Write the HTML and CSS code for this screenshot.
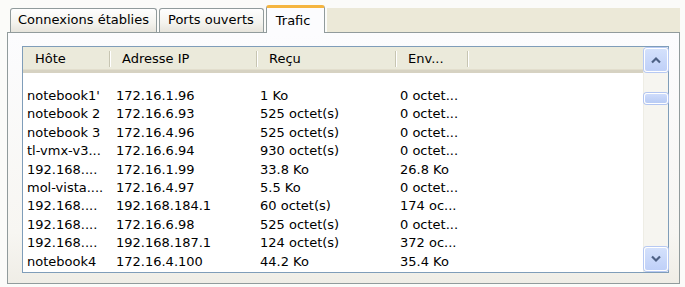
FILE: index.html
```html
<!DOCTYPE html>
<html lang="fr">

<head>
  <meta charset="UTF-8">
  <title>Trafic</title>
  <link rel="stylesheet" href="styles.css">
</head>

<body>
  <div class="window">
    <div class="tabs">
      <div class="tab">Connexions établies</div>
      <div class="tab">Ports ouverts</div>
      <div class="tab active">Trafic</div>
      <div class="tab-fill"></div>
    </div>
    <div class="panel">
      <div class="listview">
        <div class="list">
          <div class="header">
            <div class="col">Hôte</div>
            <div class="col">Adresse IP</div>
            <div class="col">Reçu</div>
            <div class="col">Env...</div>
            <div class="col last"></div>
          </div>
          <div class="rows">
            <div class="row"><span>notebook1'</span><span>172.16.1.96</span><span>1 Ko</span><span>0 octet...</span></div>
            <div class="row"><span>notebook 2</span><span>172.16.6.93</span><span>525 octet(s)</span><span>0 octet...</span></div>
            <div class="row"><span>notebook 3</span><span>172.16.4.96</span><span>525 octet(s)</span><span>0 octet...</span></div>
            <div class="row"><span>tl-vmx-v3...</span><span>172.16.6.94</span><span>930 octet(s)</span><span>0 octet...</span></div>
            <div class="row"><span>192.168....</span><span>172.16.1.99</span><span>33.8 Ko</span><span>26.8 Ko</span></div>
            <div class="row"><span>mol-vista....</span><span>172.16.4.97</span><span>5.5 Ko</span><span>0 octet...</span></div>
            <div class="row"><span>192.168....</span><span>192.168.184.1</span><span>60 octet(s)</span><span>174 oc...</span></div>
            <div class="row"><span>192.168....</span><span>172.16.6.98</span><span>525 octet(s)</span><span>0 octet...</span></div>
            <div class="row"><span>192.168....</span><span>192.168.187.1</span><span>124 octet(s)</span><span>372 oc...</span></div>
            <div class="row"><span>notebook4</span><span>172.16.4.100</span><span>44.2 Ko</span><span>35.4 Ko</span></div>
          </div>
        </div>
        <div class="scrollbar">
          <div class="sb-button">
            <svg width="12" height="8" viewBox="0 0 12 8"><path d="M2 6.5 L6 2.5 L10 6.5" fill="none" stroke="#4d6185" stroke-width="2.2"/></svg>
          </div>
          <div class="sb-track">
            <div class="sb-thumb"></div>
          </div>
          <div class="sb-button">
            <svg width="12" height="8" viewBox="0 0 12 8"><path d="M2 1.5 L6 5.5 L10 1.5" fill="none" stroke="#4d6185" stroke-width="2.2"/></svg>
          </div>
        </div>
      </div>
    </div>
  </div>
</body>

</html>
```

FILE: styles.css
```css
body {
  margin: 0;
  padding: 0;
  background-color: #fbfbf9;
  font-family: "DejaVu Sans", Verdana, sans-serif;
  font-size: 13px;
  color: #000;
}

.window {
  width: 673px;
  padding: 0 5px 0 7px;
}

.tabs {
  display: flex;
  align-items: flex-end;
  height: 32px;
  padding-left: 3px;
  position: relative;
  z-index: 1;
}

.tab {
  height: 23px;
  line-height: 22px;
  padding: 0 7px;
  margin-right: 2px;
  border: 1px solid #919b9c;
  border-bottom: none;
  border-radius: 3px 3px 0 0;
  background: linear-gradient(#fefefe, #f4f3ee 60%, #e6e4dc);
  white-space: nowrap;
}

.tab:nth-child(2) {
  padding: 0 9px 0 8px;
}

.tab.active {
  height: 25px;
  line-height: 26px;
  padding: 0 14px 0 9px;
  margin-bottom: -1px;
  border-top: 3px solid #f5b53f;
  background: #fcfcfe;
}

.tab-fill {
  flex: 1;
  height: 24px;
  background-color: #ece9d8;
}

.panel {
  height: 227px;
  padding: 13px 10px 10px 14px;
  border: 1px solid #919b9c;
  background: linear-gradient(#fcfcfe, #f7f6f2 80%, #efede6);
}

.listview {
  display: flex;
  height: 225px;
  border: 1px solid #7f9db9;
  background-color: #fff;
}

.list {
  flex: 1;
  overflow: hidden;
}

.header {
  display: grid;
  grid-template-columns: 87px 147px 139px 72px 1fr;
  height: 23px;
  background-color: #ebeadb;
  border-bottom: 3px solid #d6d2c2;
  box-shadow: inset 0 -1px 0 #e2decd;
}

.col {
  padding-left: 12px;
  border-right: 1px solid #c7c5b2;
  box-shadow: 1px 0 0 #fff;
  margin: 4px 0 3px;
  line-height: 16px;
  white-space: nowrap;
}

.col.last {
  border-right: none;
  box-shadow: none;
}

.rows {
  padding-top: 14px;
}

.row {
  display: grid;
  grid-template-columns: 87px 147px 139px 72px;
  height: 18.4px;
  line-height: 18px;
}

.row span {
  padding-left: 4px;
  white-space: nowrap;
  overflow: hidden;
}

.row span:nth-child(2) {
  padding-left: 6px;
}

.row span:nth-child(3) {
  padding-left: 3px;
}

.scrollbar {
  display: flex;
  flex-direction: column;
  width: 24px;
  background-color: #f6f5f0;
  border-left: 1px solid #eeede5;
}

.sb-button {
  display: flex;
  align-items: center;
  justify-content: center;
  height: 22px;
  margin: 1px 0;
  border: 1px solid #fff;
  border-radius: 3px;
  background: linear-gradient(#d4e1fc, #bfd0f8);
  box-shadow: 0 0 0 1px #b7c9f3;
}

.sb-track {
  flex: 1;
  padding-top: 20px;
}

.sb-thumb {
  height: 9px;
  border: 1px solid #fff;
  border-radius: 3px;
  background: linear-gradient(#cfdcfb, #b8cbf4);
  box-shadow: 0 0 0 1px #b2c5f1;
}
```
